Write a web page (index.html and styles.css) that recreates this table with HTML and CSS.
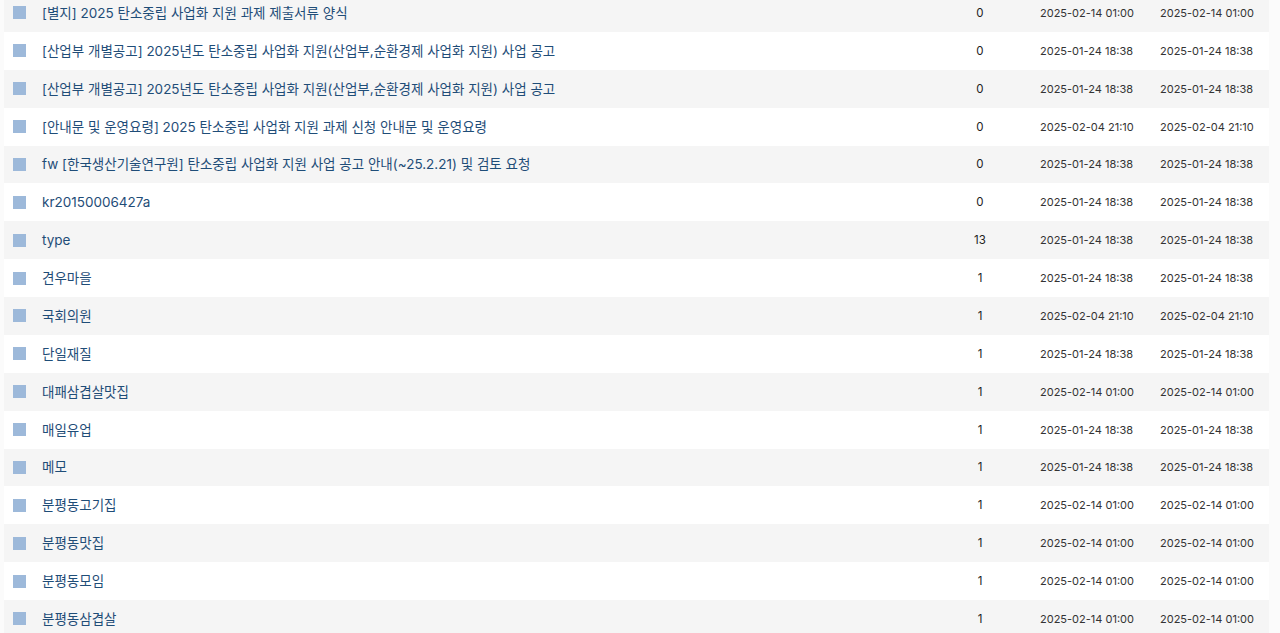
FILE: index.html
```html
<!DOCTYPE html>
<html lang="ko">
<head>
  <meta charset="UTF-8" />
  <meta name="viewport" content="width=device-width, initial-scale=1.0"/>
  <title>태그 목록</title>
  <link rel="stylesheet" href="styles.css">
</head>
<body>

  <div class="tag-list">
    <div class="row"><span class="icon"></span><a class="title">[별지] 2025 탄소중립 사업화 지원 과제 제출서류 양식</a><span class="count">0</span><span class="date">2025-02-14 01:00</span><span class="date">2025-02-14 01:00</span></div>
    <div class="row"><span class="icon"></span><a class="title">[산업부 개별공고] 2025년도 탄소중립 사업화 지원(산업부,순환경제 사업화 지원) 사업 공고</a><span class="count">0</span><span class="date">2025-01-24 18:38</span><span class="date">2025-01-24 18:38</span></div>
    <div class="row"><span class="icon"></span><a class="title">[산업부 개별공고] 2025년도 탄소중립 사업화 지원(산업부,순환경제 사업화 지원) 사업 공고</a><span class="count">0</span><span class="date">2025-01-24 18:38</span><span class="date">2025-01-24 18:38</span></div>
    <div class="row"><span class="icon"></span><a class="title">[안내문 및 운영요령] 2025 탄소중립 사업화 지원 과제 신청 안내문 및 운영요령</a><span class="count">0</span><span class="date">2025-02-04 21:10</span><span class="date">2025-02-04 21:10</span></div>
    <div class="row"><span class="icon"></span><a class="title">fw [한국생산기술연구원] 탄소중립 사업화 지원 사업 공고 안내(~25.2.21) 및 검토 요청</a><span class="count">0</span><span class="date">2025-01-24 18:38</span><span class="date">2025-01-24 18:38</span></div>
    <div class="row"><span class="icon"></span><a class="title">kr20150006427a</a><span class="count">0</span><span class="date">2025-01-24 18:38</span><span class="date">2025-01-24 18:38</span></div>
    <div class="row"><span class="icon"></span><a class="title">type</a><span class="count">13</span><span class="date">2025-01-24 18:38</span><span class="date">2025-01-24 18:38</span></div>
    <div class="row"><span class="icon"></span><a class="title">견우마을</a><span class="count">1</span><span class="date">2025-01-24 18:38</span><span class="date">2025-01-24 18:38</span></div>
    <div class="row"><span class="icon"></span><a class="title">국회의원</a><span class="count">1</span><span class="date">2025-02-04 21:10</span><span class="date">2025-02-04 21:10</span></div>
    <div class="row"><span class="icon"></span><a class="title">단일재질</a><span class="count">1</span><span class="date">2025-01-24 18:38</span><span class="date">2025-01-24 18:38</span></div>
    <div class="row"><span class="icon"></span><a class="title">대패삼겹살맛집</a><span class="count">1</span><span class="date">2025-02-14 01:00</span><span class="date">2025-02-14 01:00</span></div>
    <div class="row"><span class="icon"></span><a class="title">매일유업</a><span class="count">1</span><span class="date">2025-01-24 18:38</span><span class="date">2025-01-24 18:38</span></div>
    <div class="row"><span class="icon"></span><a class="title">메모</a><span class="count">1</span><span class="date">2025-01-24 18:38</span><span class="date">2025-01-24 18:38</span></div>
    <div class="row"><span class="icon"></span><a class="title">분평동고기집</a><span class="count">1</span><span class="date">2025-02-14 01:00</span><span class="date">2025-02-14 01:00</span></div>
    <div class="row"><span class="icon"></span><a class="title">분평동맛집</a><span class="count">1</span><span class="date">2025-02-14 01:00</span><span class="date">2025-02-14 01:00</span></div>
    <div class="row"><span class="icon"></span><a class="title">분평동모임</a><span class="count">1</span><span class="date">2025-02-14 01:00</span><span class="date">2025-02-14 01:00</span></div>
    <div class="row"><span class="icon"></span><a class="title">분평동삼겹살</a><span class="count">1</span><span class="date">2025-02-14 01:00</span><span class="date">2025-02-14 01:00</span></div>
  </div>

</body>
</html>
```

FILE: styles.css
```css
body {
  margin: 0;
  background: #fbfbfb;
  font-family: Inter, "Noto Sans CJK KR", sans-serif;
  color: #333;
  overflow: hidden;
}

.tag-list {
  width: 1265px;
  margin: -6px 0 0 4px;
}

.row {
  display: grid;
  grid-template-columns: 38px 878px 120px 120px 109px;
  align-items: center;
  height: 37.875px;
  background: #fff;
}

.row:nth-child(odd) {
  background: #f5f5f5;
}

.icon {
  width: 13px;
  height: 13px;
  margin-left: 9px;
  background: #9db9da;
}

.title {
  font-size: 13.5px;
  line-height: 16px;
  color: #1f4d78;
  white-space: nowrap;
}

.count {
  font-size: 11.5px;
  color: #222;
  text-align: center;
}

.date {
  font-size: 11px;
  color: #333;
}
```
